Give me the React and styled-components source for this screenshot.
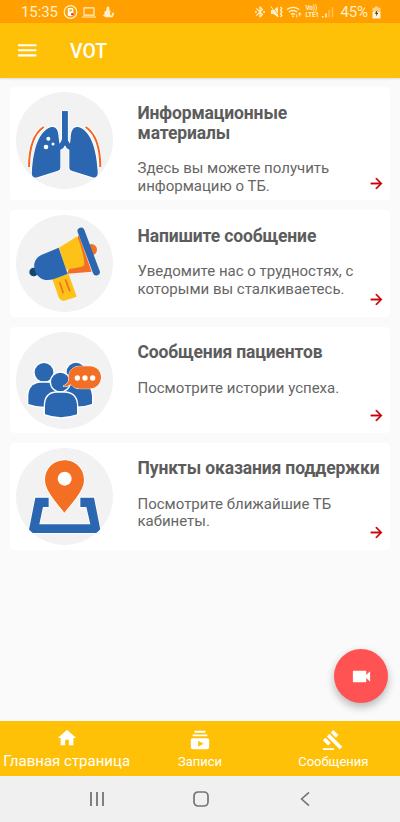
import React from 'react';
import styled, { createGlobalStyle } from 'styled-components';
import {
    MdArrowForward,
    MdBluetoothConnected,
    MdGavel,
    MdHome,
    MdMenu,
    MdSubscriptions,
    MdVideocam,
} from 'react-icons/md';

const GlobalStyle = createGlobalStyle`
    * {
        box-sizing: border-box;
    }

    body {
        background: #fafafa;
        font-family: Roboto, 'Noto Sans', sans-serif;
        margin: 0;
    }

    h1, h2, p {
        margin: 0;
    }

    svg {
        display: block;
        flex-shrink: 0;
    }
`;

// illustrations //
const Lungs = () => (
    <svg viewBox='48 36 291 291' width='97' height='97'>
        <g fill='#2b67b1' stroke='#fff' strokeWidth='5' paintOrder='stroke' strokeLinejoin='round'>
            <path d='M186 94h17v84q0 7 6 12l4 4-4 16q-10-5-14-15-4 10-15 15l-4-17 5-4q5-5 5-12z' />
            <path d='M154 141c18-3 21 15 22 32l5 36v54q0 7-7 9l-62 20c-14 3-18-6-16-20 3-44 13-117 58-131z' />
            <path d='M235 141c-18-3-22 15-23 32l-4 36v54q0 7 7 9l62 20c14 3 17-6 16-20-3-44-13-117-58-131z' />
        </g>
        <path d='M186 94h17v84q0 7 6 12l4 4-4 16q-10-5-14-15-4 10-15 15l-4-17 5-4q5-5 5-12z' fill='#2b67b1' />
        <g fill='#fff'>
            <circle cx='145' cy='176' r='6' />
            <circle cx='159' cy='192' r='4.5' />
            <circle cx='138' cy='201' r='7' />
        </g>
        <g fill='none'>
            <path d='M131 141Q88 169 87 261M257 141Q300 169 301 261' stroke='#fff' strokeWidth='10' />
            <path d='M131 141Q88 169 87 261M257 141Q300 169 301 261' stroke='#f26522' strokeWidth='6' />
        </g>
    </svg>
);

const Megaphone = () => (
    <svg viewBox='48 29 291 291' width='97' height='97'>
        <circle cx='274' cy='133' r='17' fill='#f26f24' />
        <circle cx='101' cy='200' r='13' fill='#15466f' />
        <path d='M157 221l49-15 24 68-37 12q-8 2-14-6-6-8-8-19z' fill='#fec117' />
        <path d='M179 231l11 33M196 222l14 36' stroke='#f26f24' strokeWidth='5' fill='none' />
        <path d='M236 88l39 111-73 6z' fill='#f26f24' />
        <path d='M177 127l55-34q17 42 21 79 1 11-11 13l-44 8z' fill='#fec117' />
        <path d='M176 127l27 79-41 15c-28 9-49-2-57-24-8-25 4-44 28-52z' fill='#2b67b1' />
        <path d='M243 77l46 123' stroke='#2b67b1' strokeWidth='21' strokeLinecap='round' fill='none' />
    </svg>
);

const Patients = () => (
    <svg viewBox='48 34 291 291' width='97' height='97'>
        <g fill='#2b67b1' stroke='#fff' strokeWidth='8' paintOrder='stroke' strokeLinejoin='round'>
            <circle cx='228' cy='154' r='28' />
            <path d='M182 250v-20q2-40 34-44h24q34 2 36 42v22q-46 15-94 0z' />
            <circle cx='132' cy='155' r='28' />
            <path d='M85 250v-22q0-38 34-42h26q34 4 34 42v22q-46 17-94 0z' />
            <circle cx='181' cy='184' r='28' />
            <path d='M135 281v-24q0-38 32-41h30q34 4 34 41v24q-48 17-96 0z' />
        </g>
        <path
            d='M238 137h32c20 0 33 15 33 33s-14 34-34 34h-30q-17 0-26-13-11 8-24 6 12-6 17-16v-15c2-17 14-29 32-29z'
            fill='#f26f24'
            stroke='#fff'
            strokeWidth='3'
            paintOrder='stroke'
        />
        <g fill='#fff'>
            <circle cx='232' cy='172' r='8' />
            <circle cx='255' cy='172' r='8' />
            <circle cx='278' cy='172' r='8' />
        </g>
    </svg>
);

const MapPin = () => (
    <svg viewBox='48 38 291 291' width='97' height='97'>
        <path
            d='M106 187h40v28h-17l-11 52h153l-12-52h-18v-28h41l21 106H85z'
            fill='#2b67b1'
            stroke='#fff'
            strokeWidth='5'
            paintOrder='stroke'
        />
        <path
            d='M193 75c33 0 59 25 59 59 0 28-24 55-59 98-34-43-58-70-58-98 0-34 26-59 58-59z'
            fill='#f26f24'
            stroke='#fff'
            strokeWidth='5'
            paintOrder='stroke'
        />
        <circle cx='194' cy='130' r='21' fill='#fff' />
    </svg>
);

// status bar glyphs //
const NoticeIcons = () => (
    <svg width='54' height='16' viewBox='0 0 54 16' fill='none' stroke='#fff0cc'>
        <circle cx='7.5' cy='8' r='6.3' strokeWidth='1.2' />
        <rect x='4.8' y='4' width='5.4' height='8' rx='1' fill='#fff' stroke='none' />
        <path d='M6.4 5.4h2.4v2H6.4z' fill='#e9a33c' stroke='none' />
        <circle cx='9.3' cy='10.2' r='1.3' fill='#e23b3b' stroke='none' />
        <path d='M21 3.8h10v7.4H21zM19 13h14' strokeWidth='1.2' />
        <path d='M44.5 2.2l1.8 1v3l1.5 1-1 2 1 2.3h1.5l-.8-2 2-1.3.5 2.3-1.5 2.7h-7l-2.8-2 2-1-.5-2.5 2.2-1v-2z' fill='#fff0cc' stroke='none' />
    </svg>
);

const MuteIcon = () => (
    <svg width='13' height='14' viewBox='0 0 13 14' fill='none' stroke='#fff0cc'>
        <path d='M1 5h2.5L8 1.8v10.4L3.5 9H1z' fill='#fff0cc' stroke='none' />
        <path d='M1.6 1l7.8 9.8' stroke='#ffa000' strokeWidth='.9' />
        <path d='M.8 1.5l7.7 10' />
        <path d='M10.5 2l1.4 1.7-1.4 1.7 1.4 1.7-1.4 1.7 1.4 1.7-1.4 1.5' strokeWidth='1.3' />
    </svg>
);

const WifiIcon = () => (
    <svg width='16' height='14' viewBox='0 0 16 14' fill='none' stroke='#fff0cc'>
        <path d='M.8 4.5Q7 .2 13.2 4.5M2.9 7Q7 4 11.1 7M5 9.4q2-1.4 4 0' strokeWidth='1.4' />
        <path d='M7 12.6l-1.5-1.9h3z' fill='#fff0cc' stroke='none' />
        <path d='M10.8 9.5v3M12.3 9h3M13.8 7.5v4' strokeWidth='1' />
    </svg>
);

const SignalIcon = () => (
    <svg width='12' height='12' viewBox='0 0 12 12' fill='#fff0cc'>
        <path d='M0 10h1.6v1.6H0zM3.2 7.6h1.6v4H3.2z' />
        <path d='M6.4 4h1.4v7.6H6.4zM9.8 1h1.4v10.6H9.8z' opacity='.45' />
    </svg>
);

const BatteryIcon = () => (
    <svg width='9' height='13' viewBox='0 0 9 13'>
        <path d='M3 .5h3v1.3h2.5V6h-8V1.8H3z' fill='#ffd283' />
        <path d='M.5 6h8v6.5h-8z' fill='#fff4dc' />
        <path d='M5.3 4L2.8 7.7h1.6L3.8 10.4l2.6-3.6H4.8z' fill='#4a3a10' />
    </svg>
);

const cards = [
    { title: 'Информационные материалы', text: 'Здесь вы можете получить информацию о ТБ.', art: <Lungs />, height: 113 },
    { title: 'Напишите сообщение', text: 'Уведомите нас о трудностях, с которыми вы сталкиваетесь.', art: <Megaphone /> },
    { title: 'Сообщения пациентов', text: 'Посмотрите истории успеха.', art: <Patients /> },
    { title: 'Пункты оказания поддержки', text: 'Посмотрите ближайшие ТБ кабинеты.', art: <MapPin /> },
];

const tabs = [
    { label: 'Главная страница', icon: <MdHome />, active: true },
    { label: 'Записи', icon: <MdSubscriptions /> },
    { label: 'Сообщения', icon: <MdGavel /> },
];

const App = () => {
    return (
        <Screen>
            <GlobalStyle />
            <StatusBar>
                <Clock>15:35</Clock>
                <NoticeIcons />
                <StatusRight>
                    <MdBluetoothConnected size={14} />
                    <MuteIcon />
                    <WifiIcon />
                    <Lte>
                        <span>Vo))</span>
                        <span>LTE1</span>
                    </Lte>
                    <SignalIcon />
                    <Percent>45%</Percent>
                    <BatteryIcon />
                </StatusRight>
            </StatusBar>
            <Header>
                <MenuButton aria-label='menu'>
                    <MdMenu />
                </MenuButton>
                <HeaderTitle>VOT</HeaderTitle>
            </Header>
            <CardList>
                {cards.map(({ title, text, art, height }) => (
                    <Card key={title} $height={height}>
                        <Picture>{art}</Picture>
                        <CardBody>
                            <CardTitle>{title}</CardTitle>
                            <CardText>{text}</CardText>
                        </CardBody>
                        <CardArrow />
                    </Card>
                ))}
            </CardList>
            <Fab aria-label='video'>
                <MdVideocam />
            </Fab>
            <TabBar>
                {tabs.map(({ label, icon, active }) => (
                    <Tab key={label} $active={active}>
                        {icon}
                        <span>{label}</span>
                    </Tab>
                ))}
            </TabBar>
            <SystemBar>
                <svg width='16' height='16' viewBox='0 0 16 16' stroke='#747474' strokeWidth='1.8'>
                    <path d='M2 1v14M8 1v14M14 1v14' />
                </svg>
                <svg width='16' height='16' viewBox='0 0 16 16' fill='none' stroke='#747474' strokeWidth='1.7'>
                    <rect x='1' y='1' width='14' height='14' rx='4' />
                </svg>
                <svg width='16' height='16' viewBox='0 0 16 16' fill='none' stroke='#747474' strokeWidth='1.6'>
                    <path d='M12 1.3L4.6 8l7.4 6.7' />
                </svg>
            </SystemBar>
        </Screen>
    );
};

const Screen = styled.div`
    background: #fafafa;
    display: flex;
    flex-direction: column;
    height: 822px;
    overflow: hidden;
    position: relative;
    width: 400px;
`;

const StatusBar = styled.div`
    align-items: center;
    background: #ffa000;
    color: #fff0cc;
    display: flex;
    flex-shrink: 0;
    height: 23px;
    padding: 1px 19px 0 21px;
`;

const Clock = styled.span`
    font-size: 15px;
    letter-spacing: -.1px;
    line-height: 20px;
    width: 42px;
`;

const StatusRight = styled.div`
    align-items: center;
    display: flex;
    gap: 3px;
    margin-left: auto;
`;

const Lte = styled.div`
    display: flex;
    flex-direction: column;
    font-size: 6.5px;
    font-weight: 700;
    letter-spacing: -.2px;
    line-height: 7px;
    width: 14px;
`;

const Percent = styled.span`
    font-size: 15px;
    letter-spacing: -.1px;
    line-height: 20px;
    margin: 0 1px 0 3px;
`;

const Header = styled.header`
    align-items: center;
    background: #ffc107;
    box-shadow: 0 1px 2px rgba(0, 0, 0, .12);
    color: #fff;
    display: flex;
    flex-shrink: 0;
    height: 55px;
    padding-left: 15px;
`;

const MenuButton = styled.button`
    background: transparent;
    border: none;
    color: #fff;
    cursor: pointer;
    font-size: 24.5px;
    padding: 0;
`;

const HeaderTitle = styled.h1`
    font-size: 19.4px;
    font-weight: 500;
    line-height: 24px;
    margin-left: 30.5px;
    padding-top: 2px;
`;

const CardList = styled.main`
    display: flex;
    flex: 1;
    flex-direction: column;
    gap: 9.8px;
    padding: 9.4px 10px 0;
`;

const Card = styled.section`
    background: #fff;
    border-radius: 4px;
    display: flex;
    height: ${({ $height }) => $height || 106.6}px;
    padding: 5px 6px;
`;

const Picture = styled.div`
    background: #f2f2f2;
    border-radius: 50%;
    flex-shrink: 0;
    height: 97px;
    overflow: hidden;
    width: 97px;
`;

const CardBody = styled.div`
    flex: 1;
    margin-left: 24.5px;
    min-width: 0;
    padding-top: 10.5px;
`;

const CardTitle = styled.h2`
    color: #5c5c5c;
    font-size: 17.5px;
    font-weight: 700;
    letter-spacing: -.14px;
    line-height: 20px;
    margin-right: 3px;
`;

const CardText = styled.p`
    color: #666;
    font-size: 15px;
    line-height: 17.5px;
    margin-top: 17.5px;
`;

const CardArrow = styled(MdArrowForward)`
    align-self: flex-end;
    color: #c8000a;
    height: 17px;
    margin: 0 -1px 3.7px -16px;
    width: 17px;

    path:last-child {
        stroke: currentColor;
        stroke-width: .5px;
    }
`;

const Fab = styled.button`
    align-items: center;
    background: #ff5252;
    border: none;
    border-radius: 50%;
    bottom: 119px;
    box-shadow: 0 4px 8px rgba(0, 0, 0, .28);
    color: #fff;
    cursor: pointer;
    display: flex;
    font-size: 23px;
    height: 54px;
    justify-content: center;
    padding: 0;
    position: absolute;
    right: 12px;
    width: 54px;
`;

const TabBar = styled.nav`
    background: #ffc107;
    display: grid;
    flex-shrink: 0;
    grid-template-columns: repeat(3, 1fr);
    height: 54.5px;
`;

const Tab = styled.div`
    align-items: center;
    color: #fff;
    display: flex;
    flex-direction: column;
    font-size: ${({ $active }) => ($active ? '15px' : '13px')};
    line-height: 18px;
    padding-top: ${({ $active }) => ($active ? '6px' : '8px')};
    white-space: nowrap;

    svg {
        font-size: 22px;
        margin-bottom: ${({ $active }) => ($active ? '3px' : '2px')};
    }
`;

const SystemBar = styled.div`
    align-items: center;
    background: #f0f0f0;
    display: flex;
    flex-shrink: 0;
    gap: 88px;
    height: 46.5px;
    justify-content: center;
    padding-left: 1px;
`;

export default App;
